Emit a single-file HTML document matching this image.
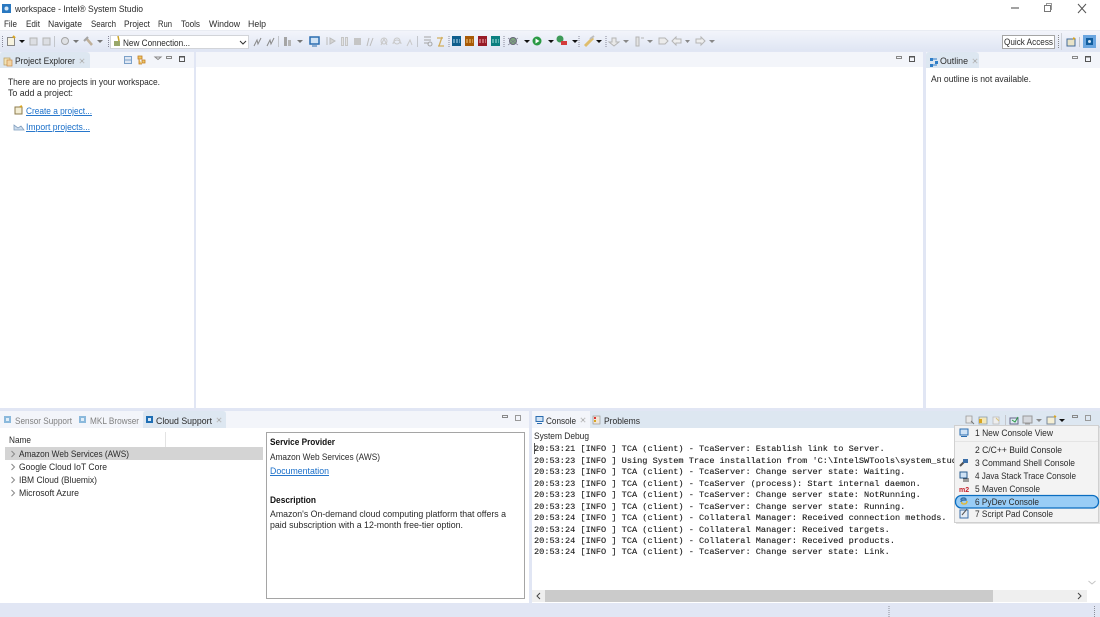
<!DOCTYPE html>
<html><head><meta charset="utf-8"><style>
html,body{margin:0;padding:0;background:#fff;overflow:hidden}
svg{display:block;filter:blur(.3px)}
text{font-family:"Liberation Sans",sans-serif;font-size:9.4px;fill:#2a2a2a}
.m{font-family:"Liberation Mono",monospace;font-size:8.6px;fill:#1c1c1c;stroke:#1c1c1c;stroke-width:.12px}
.b{font-weight:bold;fill:#111}
.l{fill:#1a6fc9;text-decoration:underline}
.g{fill:#808080}
</style></head><body>
<svg width="1100" height="617" viewBox="0 0 1100 617" xmlns="http://www.w3.org/2000/svg">
<defs>
<linearGradient id="tb" x1="0" y1="0" x2="0" y2="1"><stop offset="0" stop-color="#f3f5fb"/><stop offset="1" stop-color="#dfe5f3"/></linearGradient>
<clipPath id="con"><rect x="533" y="442" width="554" height="146"/></clipPath>
<g id="x"><path d="M.5.500l3 3M3.500.500l-3 3" stroke="#a5a5a5" stroke-width=".8"/><path d="M0 1v-1h1M3 0h1v1M4 3v1h-1M1 4h-1v-1" fill="none" stroke="#c4c4c4" stroke-width=".6"/></g>
</defs>
<rect width="1100" height="617" fill="#fff"/>
<!-- title -->
<rect x="2" y="4" width="9" height="9" fill="#2a78c0"/><circle cx="6.500" cy="8.500" r="2" fill="#d8e8f6"/>
<text x="15" y="12" textLength="128" lengthAdjust="spacingAndGlyphs" fill="#333">workspace - Intel® System Studio</text>
<path d="M1011 8h8" stroke="#444" stroke-width="1"/>
<path d="M1044.500 5.500h6v6h-6z" fill="#fff" stroke="#777"/><path d="M1046.500 5v-1.500h5v6h-1" fill="none" stroke="#999"/>
<path d="M1078 4l8 9M1086 4l-8 9" stroke="#555" stroke-width="1"/>
<!-- menu -->
<g>
<text x="4" y="27" textLength="13" lengthAdjust="spacingAndGlyphs">File</text><text x="26" y="27" textLength="14" lengthAdjust="spacingAndGlyphs">Edit</text><text x="48" y="27" textLength="34" lengthAdjust="spacingAndGlyphs">Navigate</text><text x="91" y="27" textLength="25" lengthAdjust="spacingAndGlyphs">Search</text><text x="124" y="27" textLength="26" lengthAdjust="spacingAndGlyphs">Project</text><text x="158" y="27" textLength="14" lengthAdjust="spacingAndGlyphs">Run</text><text x="181" y="27" textLength="19" lengthAdjust="spacingAndGlyphs">Tools</text><text x="209" y="27" textLength="31" lengthAdjust="spacingAndGlyphs">Window</text><text x="248" y="27" textLength="18" lengthAdjust="spacingAndGlyphs">Help</text>
</g>
<!-- toolbar -->
<rect x="0" y="30" width="1100" height="21" fill="url(#tb)"/>
<rect x="0" y="30" width="1100" height="1" fill="#e9ecf3"/>
<path d="M2.500 36v11M108.500 36v11M449 36v11M504 36v11M579 36v11M606 36v11" stroke="#889" stroke-dasharray="1 1"/>
<path d="M54.500 36v11M278.500 36v11M417.500 36v11" stroke="#c3c6cc"/>
<rect x="7.500" y="37.500" width="7" height="8" fill="#f7f3e0" stroke="#888"/><path d="M13 36l2 2" stroke="#d9a520" stroke-width="2"/>
<path d="M19 40h6l-3 3z" fill="#111"/>
<rect x="30" y="38" width="7" height="7" fill="#dcdee3" stroke="#b5b5b5"/><rect x="43" y="38" width="7" height="7" fill="#dcdee3" stroke="#b5b5b5"/>
<circle cx="65" cy="41" r="3.500" fill="#dfe1e5" stroke="#a5a5a5"/>
<path d="M73 40h6l-3 3z" fill="#777"/>
<path d="M86 38l6 7" stroke="#bfb09a" stroke-width="2.500"/><path d="M84 41l4-4" stroke="#a5a5a5" stroke-width="2"/>
<path d="M97 40h6l-3 3z" fill="#777"/>
<!-- combo -->
<rect x="110.500" y="35.500" width="138" height="13" fill="#fff" stroke="#d2d4d9"/>
<rect x="114" y="41" width="6" height="5" fill="#9aa86a"/><path d="M118 36l1 5" stroke="#c9a227" stroke-width="1.500"/>
<text x="123" y="46" textLength="67" lengthAdjust="spacingAndGlyphs">New Connection...</text>
<path d="M240 41l3 3 3-3" stroke="#333" fill="none"/>
<path d="M254 46l3-6 1 4 3-6M267 46l3-6 1 4 3-6" stroke="#888" fill="none"/>
<rect x="284" y="37" width="3" height="9" fill="#a5a5a5"/><rect x="288" y="40" width="3" height="6" fill="#b5b5b5"/><path d="M297 40h6l-3 3z" fill="#777"/>
<rect x="310" y="37" width="9" height="7" fill="#cfe2f5" stroke="#2a6cb0" stroke-width="1.500"/><path d="M312 46h5" stroke="#2a6cb0"/>
<path d="M327 37v8M330 38l5 3-5 3z" fill="#d5d5d5" stroke="#bbb"/>
<path d="M341.500 37.500h2v8h-2zM345.500 37.500h2v8h-2z" fill="#e3e3e3" stroke="#c5c5c5"/>
<rect x="354" y="38" width="7" height="7" fill="#c5c5c5"/>
<path d="M367 46l2-8M370 46l3-8" stroke="#bbb" fill="none"/>
<path d="M381 45l3-6 3 6M393 44a4 4 0 0 1 8 0M407 46l3-6 2 5" stroke="#c8c8c8" fill="none"/>
<circle cx="384" cy="41" r="3" fill="none" stroke="#c8c8c8"/><circle cx="397" cy="41" r="3" fill="none" stroke="#c8c8c8"/>
<path d="M424 37h7M424 40h7M424 43h5" stroke="#a5a5a5"/><circle cx="430" cy="44" r="2" fill="none" stroke="#a5a5a5"/>
<path d="M437 38h6M442 37l-3 9M438 46h6" stroke="#d2ae5e" stroke-width="1.300" fill="none"/>
<rect x="452" y="36" width="9" height="10" fill="#0f5e8c"/><rect x="465" y="36" width="9" height="10" fill="#a85a06"/><rect x="478" y="36" width="9" height="10" fill="#971a26"/><rect x="491" y="36" width="9" height="10" fill="#0b7f80"/>
<path d="M453 40h7M453 42h7" stroke="#b9dff0" stroke-dasharray="2 1"/><path d="M466 40h7M466 42h7" stroke="#f5cf8a" stroke-dasharray="2 1"/><path d="M479 40h7M479 42h7" stroke="#f3b5bb" stroke-dasharray="2 1"/><path d="M492 40h7M492 42h7" stroke="#a9e5df" stroke-dasharray="2 1"/>
<circle cx="513" cy="41" r="3.500" fill="#7da67d" stroke="#667"/><path d="M508 38l10 7M518 38l-10 7" stroke="#778" stroke-width=".7"/>
<path d="M524 40h6l-3 3z" fill="#111"/>
<circle cx="537" cy="41" r="4.500" fill="#2a9a44"/><path d="M535.500 38.500l4 2.500-4 2.500z" fill="#fff"/>
<path d="M548 40h6l-3 3z" fill="#111"/>
<circle cx="560" cy="39" r="3.500" fill="#3d9a58"/><rect x="561" y="41" width="6" height="4" fill="#d43b3b"/>
<path d="M572 40h6l-3 3z" fill="#111"/>
<path d="M585 46l8-8" stroke="#dfbd6c" stroke-width="3"/><path d="M590 39l4-3" stroke="#bdbdbd" stroke-width="2"/>
<path d="M596 40h6l-3 3z" fill="#111"/>
<path d="M612 38h4v4h3l-5 4-5-4h3z" fill="#e9e9e9" stroke="#b5b5b5"/>
<path d="M623 40h6l-3 3z" fill="#888"/>
<path d="M636 37h3v9h-3zM641 38h3" fill="#e3e3e3" stroke="#b5b5b5"/>
<path d="M647 40h6l-3 3z" fill="#888"/>
<path d="M659 38h6l3 3-3 3h-6z" fill="#ebebeb" stroke="#b5b5b5"/>
<path d="M672 41l4-4v2h5v4h-5v2z" fill="#eee" stroke="#b5b5b5"/>
<path d="M685 40h5l-2.500 3z" fill="#888"/>
<path d="M705 41l-4-4v2h-5v4h5v2z" fill="#eee" stroke="#b5b5b5"/>
<path d="M709 40h6l-3 3z" fill="#888"/>
<rect x="1002.500" y="35.500" width="52" height="13" fill="#fff" stroke="#a5a5a5"/>
<text x="1004" y="45" textLength="49" lengthAdjust="spacingAndGlyphs" fill="#555">Quick Access</text>
<path d="M1058.500 35v13" stroke="#888" stroke-dasharray="1 1"/><path d="M1061.500 33v17" stroke="#cfd2d9"/>
<rect x="1067" y="39" width="8" height="7" fill="#e8e3c8" stroke="#446b99"/><path d="M1073 38l2 1" stroke="#d9a520" stroke-width="2"/>
<path d="M1079.500 37v10" stroke="#c3c6cc"/>
<rect x="1083" y="35" width="13" height="13" fill="#6ba6e0"/><rect x="1086" y="38" width="7" height="7" fill="#115d9e"/><circle cx="1089.500" cy="41.500" r="1.500" fill="#cfe3f5"/>
<!-- workbench bg -->
<rect x="0" y="51" width="1100" height="566" fill="#e1e6f4"/>
<!-- Project explorer -->
<rect x="0" y="52" width="194" height="356" fill="#fff"/>
<rect x="0" y="52" width="194" height="16" fill="#f3f5fa"/>
<path d="M0 68V55q0-3 3-3h83q4 0 4 4v12z" fill="#dde7f1"/>
<rect x="4" y="58" width="6" height="7" fill="#f1e3b8" stroke="#b89a5b" stroke-width=".7"/><rect x="7" y="60" width="5" height="6" fill="#f3d5a4" stroke="#c98a48" stroke-width=".7"/>
<text x="15" y="64" textLength="60" lengthAdjust="spacingAndGlyphs" fill="#333">Project Explorer</text>
<use href="#x" x="80" y="59"/>
<rect x="124.500" y="56.500" width="7" height="7" fill="#dfe7f3" stroke="#7ba0c8"/><path d="M125 60h6" stroke="#7ba0c8"/>
<path d="M138 56h4v3h-4zM142 60h3v3h-3zM139 59v5h3" fill="#edc765" stroke="#c27c22" stroke-width=".8"/>
<path d="M155 57h6l-3 2.500z" fill="none" stroke="#888"/>
<rect x="166.500" y="56.500" width="5" height="2" fill="none" stroke="#888"/>
<rect x="179.500" y="56.500" width="5" height="5" fill="none" stroke="#555"/><path d="M179 57h6" stroke="#555"/>
<text x="8" y="85" textLength="152" lengthAdjust="spacingAndGlyphs">There are no projects in your workspace.</text>
<text x="8" y="96" textLength="65" lengthAdjust="spacingAndGlyphs">To add a project:</text>
<rect x="15" y="107" width="7" height="7" fill="#f3edd4" stroke="#8c7b4b"/><path d="M20 107l2-1" stroke="#d9a520" stroke-width="2"/>
<text x="26" y="114" textLength="66" lengthAdjust="spacingAndGlyphs" class="l">Create a project...</text>
<path d="M14 130v-5l4 3 3-2 3 4z" fill="#cfdeee" stroke="#7f9dbd" stroke-width=".8"/>
<text x="26" y="130" textLength="64" lengthAdjust="spacingAndGlyphs" class="l">Import projects...</text>
<!-- Editor -->
<rect x="196" y="52" width="727" height="356" fill="#fff"/>
<rect x="196" y="52" width="727" height="15" fill="#f3f5fa"/>
<rect x="896.500" y="56.500" width="5" height="2" fill="none" stroke="#888"/>
<rect x="909.500" y="56.500" width="5" height="5" fill="none" stroke="#555"/><path d="M909 57h6" stroke="#555"/>
<!-- Outline -->
<rect x="926" y="52" width="174" height="356" fill="#fff"/>
<rect x="926" y="52" width="174" height="16" fill="#f3f5fa"/>
<path d="M926 68V55q0-3 3-3h46q4 0 4 4v12z" fill="#dde7f1"/>
<path d="M930 58h3v3h-3zM930 64h3v3h-3zM935 61h3v3h-3z" fill="#2f7ec7"/><path d="M933 59h4M933 65h4" stroke="#2f7ec7"/>
<text x="940" y="64" textLength="28" lengthAdjust="spacingAndGlyphs" fill="#333">Outline</text>
<use href="#x" x="973" y="59"/>
<rect x="1072.500" y="56.500" width="5" height="2" fill="none" stroke="#888"/>
<rect x="1085.500" y="56.500" width="5" height="5" fill="none" stroke="#555"/><path d="M1085 57h6" stroke="#555"/>
<text x="931" y="82" textLength="100" lengthAdjust="spacingAndGlyphs">An outline is not available.</text>
<!-- bottom left -->
<rect x="0" y="411" width="529" height="192" fill="#fff"/>
<rect x="0" y="411" width="529" height="17" fill="#f3f5fa"/>
<path d="M143 428V414q0-3 3-3h77q3 0 3 3v14z" fill="#dde7f1"/>
<rect x="4" y="416" width="7" height="7" fill="#8bb9dc"/><rect x="6" y="418" width="3" height="3" fill="#e1eef8"/>
<text x="15" y="424" textLength="57" lengthAdjust="spacingAndGlyphs" class="g">Sensor Support</text>
<rect x="79" y="416" width="7" height="7" fill="#8bb9dc"/><rect x="81" y="418" width="3" height="3" fill="#e1eef8"/>
<text x="90" y="424" textLength="49" lengthAdjust="spacingAndGlyphs" class="g">MKL Browser</text>
<rect x="146" y="416" width="7" height="7" fill="#1f6fb5"/><rect x="148" y="418" width="3" height="3" fill="#d7e8f6"/>
<text x="156" y="424" textLength="56" lengthAdjust="spacingAndGlyphs">Cloud Support</text>
<use href="#x" x="217" y="418"/>
<rect x="502.500" y="415.500" width="5" height="2" fill="none" stroke="#888"/>
<rect x="515.500" y="415.500" width="5" height="5" fill="none" stroke="#999"/>
<text x="9" y="443" textLength="22" lengthAdjust="spacingAndGlyphs">Name</text>
<path d="M165.500 432v15" stroke="#e3e3e3"/>
<rect x="5" y="447" width="258" height="13" fill="#d4d4d4"/>
<path d="M11.500 451l3 3-3 3M11.500 464l3 3-3 3M11.500 477l3 3-3 3M11.500 490l3 3-3 3" fill="none" stroke="#888"/>
<text x="19" y="457" textLength="110" lengthAdjust="spacingAndGlyphs">Amazon Web Services (AWS)</text>
<text x="19" y="470" textLength="88" lengthAdjust="spacingAndGlyphs">Google Cloud IoT Core</text>
<text x="19" y="483" textLength="78" lengthAdjust="spacingAndGlyphs">IBM Cloud (Bluemix)</text>
<text x="19" y="496" textLength="60" lengthAdjust="spacingAndGlyphs">Microsoft Azure</text>
<rect x="266.500" y="432.500" width="258" height="166" fill="#fff" stroke="#a5a5a5"/>
<text x="270" y="445" textLength="65" lengthAdjust="spacingAndGlyphs" class="b">Service Provider</text>
<text x="270" y="460" textLength="110" lengthAdjust="spacingAndGlyphs">Amazon Web Services (AWS)</text>
<text x="270" y="474" textLength="59" lengthAdjust="spacingAndGlyphs" class="l">Documentation</text>
<text x="270" y="503" textLength="46" lengthAdjust="spacingAndGlyphs" class="b">Description</text>
<text x="270" y="517" textLength="236" lengthAdjust="spacingAndGlyphs">Amazon's On-demand cloud computing platform that offers a</text>
<text x="270" y="528" textLength="193" lengthAdjust="spacingAndGlyphs">paid subscription with a 12-month free-tier option.</text>
<!-- console panel -->
<rect x="532" y="411" width="568" height="192" fill="#fff"/>
<rect x="532" y="411" width="568" height="17" fill="#dde7f1"/>
<rect x="532" y="411" width="58" height="17" fill="#f3f5fa"/>
<rect x="536" y="416.500" width="7" height="5" fill="#cfe2f5" stroke="#2a6cb0"/><path d="M537 423.500h5" stroke="#2a6cb0"/>
<text x="546" y="424" textLength="30" lengthAdjust="spacingAndGlyphs" fill="#333">Console</text>
<use href="#x" x="581" y="418"/>
<rect x="593" y="416" width="7" height="8" fill="#f1e6d8" stroke="#999" stroke-width=".7"/><rect x="594" y="417" width="2" height="2" fill="#d33"/><rect x="594" y="420" width="2" height="2" fill="#d9a520"/>
<text x="604" y="424" textLength="36" lengthAdjust="spacingAndGlyphs" fill="#333">Problems</text>
<path d="M966 416h6v7h-6z" fill="#e8e8e8" stroke="#999" stroke-width=".8"/><path d="M971 421l3 3" stroke="#777"/>
<path d="M979 417h8v7h-8z" fill="#f2e7b8" stroke="#8899aa" stroke-width=".8"/><rect x="979" y="419" width="3" height="4" fill="#d9a520"/>
<path d="M993 417h6v7h-6z" fill="#eee" stroke="#bbb" stroke-width=".8"/><path d="M996 418l3 3" stroke="#d9c27a"/>
<path d="M1005.500 415v11" stroke="#c3c6cc"/>
<rect x="1010" y="418" width="8" height="6" fill="#dfe9f3" stroke="#668"/><path d="M1012 420l3 2 3-5" stroke="#2a9a44" fill="none"/>
<rect x="1023" y="416" width="9" height="7" fill="#d5d8dd" stroke="#999"/><path d="M1025 424h5" stroke="#999"/>
<path d="M1036 419h6l-3 3z" fill="#888"/>
<rect x="1047" y="417" width="8" height="7" fill="#f5efd4" stroke="#7a8a9a"/><path d="M1054 416l2 1" stroke="#d9a520" stroke-width="2"/>
<path d="M1059 419h6l-3 3z" fill="#111"/>
<rect x="1072.500" y="415.500" width="5" height="2" fill="none" stroke="#888"/>
<rect x="1085.500" y="415.500" width="5" height="5" fill="none" stroke="#999"/>
<text x="534" y="439" textLength="55" lengthAdjust="spacingAndGlyphs" fill="#333">System Debug</text>
<path d="M534.500 443v11" stroke="#555"/>
<g clip-path="url(#con)">
<text class="m" x="534" y="451">20:53:21 [INFO ] TCA (client) - TcaServer: Establish link to Server.</text>
<text class="m" x="534" y="463">20:53:23 [INFO ] Using System Trace installation from 'C:\IntelSWTools\system_studio_2019\tools'</text>
<text class="m" x="534" y="474">20:53:23 [INFO ] TCA (client) - TcaServer: Change server state: Waiting.</text>
<text class="m" x="534" y="486">20:53:23 [INFO ] TCA (client) - TcaServer (process): Start internal daemon.</text>
<text class="m" x="534" y="497">20:53:23 [INFO ] TCA (client) - TcaServer: Change server state: NotRunning.</text>
<text class="m" x="534" y="509">20:53:23 [INFO ] TCA (client) - TcaServer: Change server state: Running.</text>
<text class="m" x="534" y="520">20:53:24 [INFO ] TCA (client) - Collateral Manager: Received connection methods.</text>
<text class="m" x="534" y="532">20:53:24 [INFO ] TCA (client) - Collateral Manager: Received targets.</text>
<text class="m" x="534" y="543">20:53:24 [INFO ] TCA (client) - Collateral Manager: Received products.</text>
<text class="m" x="534" y="554">20:53:24 [INFO ] TCA (client) - TcaServer: Change server state: Link.</text>
</g>
<!-- scrollbars -->
<rect x="1086" y="428" width="14" height="161" fill="#fff"/>
<path d="M1088.500 581l3.500 3 3.500-3" fill="none" stroke="#c5c5c5"/>
<rect x="532" y="590" width="555" height="12" fill="#efefef"/>
<rect x="545" y="590" width="448" height="12" fill="#cbcbcb"/>
<path d="M540 593l-3 3 3 3M1078 593l3 3-3 3" fill="none" stroke="#444"/>
<!-- status -->
<path d="M889 606v12M1094.500 606v12" stroke="#8b8f99" stroke-dasharray="1 1"/>
<!-- drop-down menu -->
<rect x="956" y="426" width="145" height="98" fill="#c8c8c8" opacity=".5"/>
<rect x="954.500" y="425.500" width="144" height="97" fill="#f3f3f3" stroke="#d0d0d0"/>
<rect x="955" y="441" width="143" height="1" fill="#e4e4e4"/>
<rect x="960" y="429" width="8" height="6" fill="#cfe2f5" stroke="#2a6cb0"/><path d="M961 436.500h6" stroke="#2a6cb0"/>
<text x="975" y="436" textLength="78" lengthAdjust="spacingAndGlyphs" fill="#444">1 New Console View</text>
<text x="975" y="453" textLength="87" lengthAdjust="spacingAndGlyphs" fill="#444">2 C/C++ Build Console</text>
<path d="M960 466l4-4" stroke="#555" stroke-width="2"/><rect x="963" y="459" width="5" height="4" fill="#3a6ea8"/>
<text x="975" y="466" textLength="100" lengthAdjust="spacingAndGlyphs" fill="#444">3 Command Shell Console</text>
<rect x="960" y="472" width="7" height="6" fill="#cfe2f5" stroke="#2a5c90"/><path d="M963 479h6M963 481h6" stroke="#444"/>
<text x="975" y="479" textLength="101" lengthAdjust="spacingAndGlyphs" fill="#444">4 Java Stack Trace Console</text>
<text x="959" y="492" style="font-size:7px;font-weight:bold;fill:#c4202a">m2</text>
<text x="975" y="492" textLength="65" lengthAdjust="spacingAndGlyphs" fill="#444">5 Maven Console</text>
<rect x="955.500" y="495.500" width="143" height="12.500" rx="6" fill="#99cdf6" stroke="#0a6dc0" stroke-width="1.300"/>
<path d="M961 500q0-2 2.500-2t2.500 2h-2q-3 0-3 2" fill="none" stroke="#3a72a8" stroke-width="1.500"/><path d="M967 501q0 3-3 3t-2-2" fill="none" stroke="#e0b83a" stroke-width="1.500"/>
<text x="975" y="505" textLength="64" lengthAdjust="spacingAndGlyphs" fill="#444">6 PyDev Console</text>
<rect x="960" y="510" width="8" height="8" fill="#e4ecf5" stroke="#3a6ea8"/><path d="M962 515l5-6" stroke="#555"/>
<text x="975" y="517" textLength="78" lengthAdjust="spacingAndGlyphs" fill="#444">7 Script Pad Console</text>
</svg>
</body></html>
